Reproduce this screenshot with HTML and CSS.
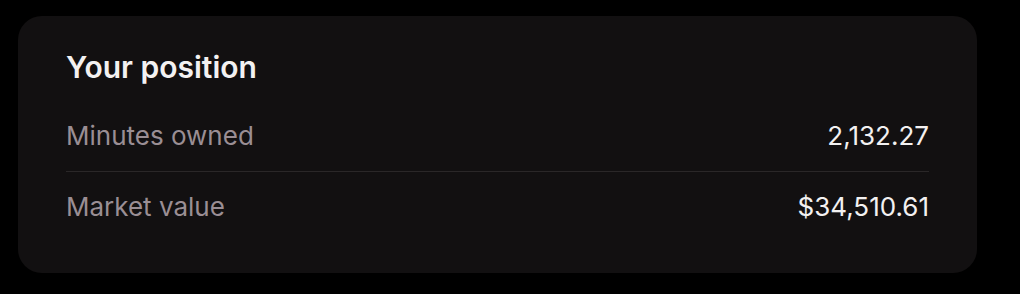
FILE: index.html
```html
<!DOCTYPE html>
<html lang="en">
<head>
<meta charset="utf-8">
<title>Your position</title>
<link rel="stylesheet" href="styles.css">
</head>
<body>
  <section class="card">
    <h2 class="card-title">Your position</h2>
    <div class="row">
      <span class="label">Minutes owned</span>
      <span class="value">2,132.27</span>
    </div>
    <div class="row">
      <span class="label">Market value</span>
      <span class="value">$34,510.61</span>
    </div>
  </section>
</body>
</html>
```

FILE: styles.css
```css
html, body {
  margin: 0;
  background: #000;
}
body {
  padding: 16px 18px;
  font-family: Inter, "Noto Sans", sans-serif;
}
.card {
  width: 959px;
  box-sizing: border-box;
  background: #121011;
  border-radius: 24px;
  padding: 35px 48px 31px;
}
.card-title {
  margin: 0 0 18px;
  font-size: 30px;
  line-height: 32px;
  font-weight: 600;
  color: #f3f1f1;
}
.row {
  display: flex;
  justify-content: space-between;
  align-items: center;
  padding: 18px 0;
  line-height: 34px;
  font-size: 26px;
}
.row + .row {
  border-top: 1px solid #2a2728;
}
.label {
  color: #9a8e94;
}
.value {
  color: #f3f1f1;
}
```
